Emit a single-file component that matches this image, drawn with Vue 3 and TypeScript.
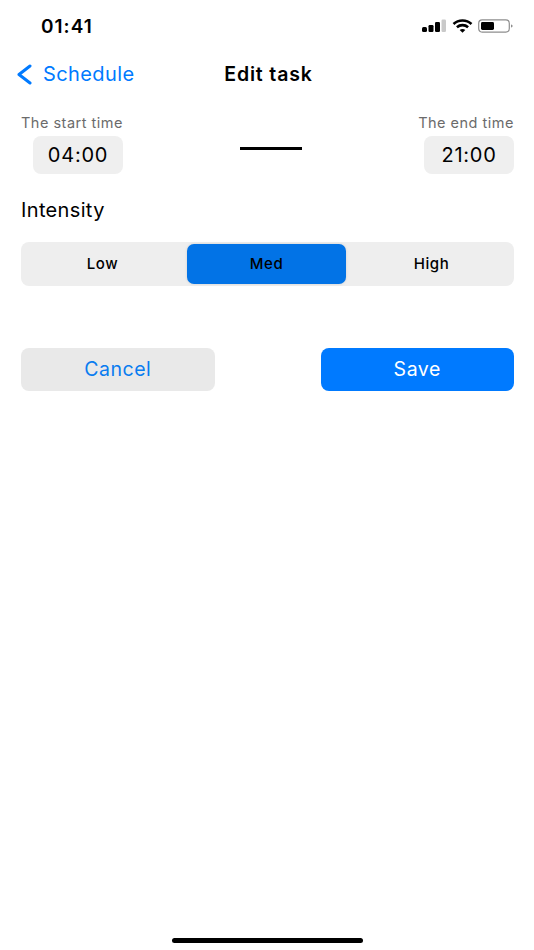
<script setup lang="ts">
const levels: string[] = ['Low', 'Med', 'High']
const active = 'Med'
</script>

<template>
  <div class="screen">
    <header class="status">
      <span class="clock">01:41</span>
      <div class="status-icons">
        <svg width="24" height="14" viewBox="0 0 24 14">
          <rect x="0" y="8" width="5" height="5" rx="1.5" fill="#000" />
          <rect x="6.5" y="6" width="5" height="7" rx="1.2" fill="#000" />
          <rect x="13" y="3" width="5" height="10" rx="1.2" fill="#000" />
          <rect x="19.5" y="0.5" width="4.5" height="12.5" rx="1.2" fill="#c9c9c9" />
        </svg>
        <svg class="wifi" width="21" height="14" viewBox="0 0 20 14" fill="none" stroke="#000" stroke-width="2.6">
          <path d="M1 5 C6 0.4 14 0.4 19 5" />
          <path d="M4.4 8.2 C7.6 5.4 12.4 5.4 15.6 8.2" />
          <path d="M10 13.8 L7.2 10.9 C8.8 9.8 11.2 9.8 12.8 10.9 Z" fill="#000" stroke="none" />
        </svg>
        <svg width="35" height="14" viewBox="0 0 35 14">
          <rect x="0.7" y="0.9" width="30.6" height="12.2" rx="3.5" fill="none" stroke="#8e8e8e" stroke-width="1.2" />
          <rect x="3" y="3" width="13" height="8" rx="1.4" fill="#000" />
          <path d="M33 5.2 L35 7 L33 8.8 Z" fill="#8e8e8e" />
        </svg>
      </div>
    </header>

    <nav class="nav">
      <div class="back">
        <svg width="16" height="22" viewBox="0 0 16 22" fill="none" stroke="#007aff" stroke-width="3" stroke-linecap="round" stroke-linejoin="round">
          <path d="M14 3 L3 11.5 L14 20" />
        </svg>
        <span>Schedule</span>
      </div>
      <h1 class="title">Edit task</h1>
    </nav>

    <main class="content">
      <section class="times">
        <div class="time-col">
          <span class="time-label">The start time</span>
          <div class="time-box">04:00</div>
        </div>
        <div class="dash"></div>
        <div class="time-col">
          <span class="time-label">The end time</span>
          <div class="time-box">21:00</div>
        </div>
      </section>

      <h2 class="intensity">Intensity</h2>

      <div class="segments">
        <button v-for="level in levels" :key="level" class="segment" :class="{ selected: level === active }">{{ level }}</button>
      </div>

      <div class="actions">
        <button class="action cancel">Cancel</button>
        <button class="action save">Save</button>
      </div>
    </main>

    <div class="home-bar"></div>
  </div>
</template>

<style>
html, body { margin: 0; background: #fff; }
</style>

<style scoped>
.screen {
  width: 534px;
  height: 950px;
  position: relative;
  display: flex;
  flex-direction: column;
  overflow: hidden;
  background: #fff;
  font-family: Inter, "Liberation Sans", sans-serif;
  color: #000;
}
.status {
  height: 52px;
  box-sizing: border-box;
  padding: 0 21px 0 41px;
  display: flex;
  align-items: center;
  justify-content: space-between;
}
.clock { font-size: 19px; font-weight: 600; letter-spacing: 1px; }
.status-icons { display: flex; align-items: center; gap: 5.5px; }
.nav {
  height: 45px;
  position: relative;
  display: flex;
  align-items: center;
  justify-content: center;
  padding: 0 0 2px 3px;
  box-sizing: border-box;
}
.back {
  position: absolute;
  left: 16px;
  top: 11px;
  display: flex;
  align-items: center;
  gap: 11px;
  color: #007aff;
  font-size: 20px;
  line-height: 22px;
  letter-spacing: 0.4px;
}
.title { margin: 0; font-size: 19.5px; font-weight: 600; letter-spacing: 0.85px; }
.content { padding: 0 20px 0 21px; display: flex; flex-direction: column; }
.times { display: flex; justify-content: space-between; align-items: flex-start; margin-top: 17px; }
.time-col { display: flex; flex-direction: column; align-items: flex-end; gap: 4px; }
.time-label { font-size: 14.5px; line-height: 18px; color: #6b6b6b; letter-spacing: 0.5px; white-space: nowrap; }
.time-box {
  width: 90px;
  height: 38px;
  border-radius: 8px;
  background: #efefef;
  display: flex;
  align-items: center;
  justify-content: center;
  font-size: 20px;
  letter-spacing: 0.75px;
}
.dash { width: 62px; height: 3px; background: #000; margin-top: 33px; }
.intensity { margin: 24px 0 0; font-size: 20px; line-height: 24px; font-weight: 400; letter-spacing: 0.35px; }
.segments {
  margin-top: 20px;
  height: 44px;
  border-radius: 8px;
  background: #eeeeee;
  display: grid;
  grid-template-columns: 163px 159px 1fr;
  column-gap: 3px;
  align-items: center;
}
.segment {
  height: 40px;
  border: 0;
  padding: 0 0 2px;
  background: transparent;
  font-family: inherit;
  font-size: 15px;
  font-weight: 500;
  letter-spacing: 0.55px;
  color: #000;
  border-radius: 7px;
}
.segment.selected { background: #0273e6; box-shadow: 0 0 3px rgba(0, 0, 0, 0.12); }
.actions { margin-top: 62px; display: flex; justify-content: space-between; }
.action {
  width: 193.5px;
  height: 43px;
  border: 0;
  border-radius: 8px;
  padding: 0 0 2px;
  font-family: inherit;
  font-size: 19.5px;
  letter-spacing: 0.55px;
}
.cancel { background: #e9e9e9; color: #0a7cf0; }
.save { background: #007aff; color: #fff; }
.home-bar {
  position: absolute;
  left: 172px;
  bottom: 7px;
  width: 191px;
  height: 5px;
  border-radius: 3px;
  background: #000;
}
</style>
